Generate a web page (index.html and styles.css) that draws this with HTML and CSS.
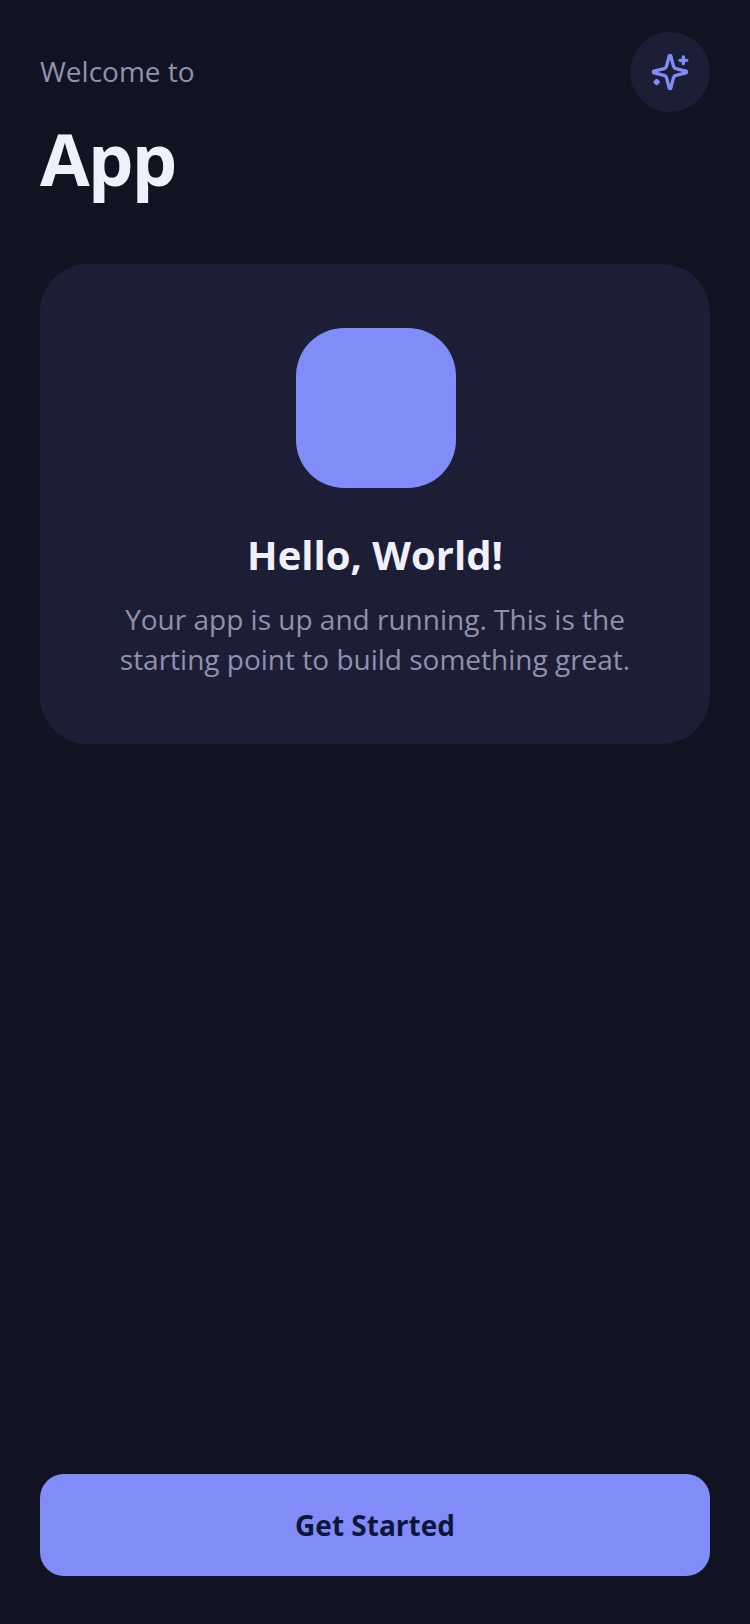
FILE: index.html
```html
<!DOCTYPE html>
<html lang="en">
<head>
<meta charset="utf-8">
<title>App</title>
<link rel="stylesheet" href="styles.css">
</head>
<body>
<main class="screen">
  <header class="header">
    <div class="titles">
      <p class="welcome">Welcome to</p>
      <h1 class="app-name">App</h1>
    </div>
    <button class="icon-btn" aria-label="Sparkles">
      <svg class="sparkle" viewBox="0 0 24 24" fill="none" stroke="currentColor" stroke-width="2" stroke-linecap="round" stroke-linejoin="round">
        <path d="M9.937 15.5A2 2 0 0 0 8.5 14.063l-6.135-1.582a.5.5 0 0 1 0-.962L8.5 9.936A2 2 0 0 0 9.937 8.5l1.582-6.135a.5.5 0 0 1 .963 0L14.063 8.5A2 2 0 0 0 15.5 9.937l6.135 1.581a.5.5 0 0 1 0 .964L15.5 14.063a2 2 0 0 0-1.437 1.437l-1.582 6.135a.5.5 0 0 1-.963 0z"/>
        <path d="M20 3v4"/><path d="M22 5h-4"/><path d="M4 17v2"/><path d="M5 18H3"/>
      </svg>
    </button>
  </header>
  <section class="card">
    <div class="logo"></div>
    <h2 class="card-title">Hello, World!</h2>
    <p class="card-text">Your app is up and running. This is the starting point to build something great.</p>
  </section>
  <div class="spacer"></div>
  <button class="cta">Get Started</button>
</main>
</body>
</html>
```
FILE: styles.css
```css
* { box-sizing: border-box; }
html, body { margin: 0; height: 100%; }
body { background: #111322; font-family: "Open Sans", sans-serif; }
.screen { height: 1624px; display: flex; flex-direction: column; padding: 32px 40px 48px; }
.header { display: flex; justify-content: space-between; align-items: flex-start; }
.welcome { margin: 0; padding-top: 20px; font-size: 28px; line-height: 38px; color: #8f91ae; }
.app-name { margin: 19px 0 -1px; font-size: 72px; line-height: 98px; font-weight: 700; letter-spacing: -1.8px; color: #f0f0fa; }
.icon-btn { width: 80px; height: 80px; border: 0; padding: 0; border-radius: 50%; background: #1c1e36; color: #818cf8; display: flex; align-items: center; justify-content: center; }
.sparkle { width: 40px; height: 40px; }
.card { margin-top: 58px; height: 480px; padding: 64px 40px 0; border-radius: 48px; background: #1c1e36; display: flex; flex-direction: column; align-items: center; text-align: center; }
.logo { width: 160px; height: 160px; margin-left: 2px; border-radius: 48px; background: #818cf8; }
.card-title { margin: 40px 0 0; font-size: 40px; line-height: 54px; font-weight: 700; color: #f0f0fa; }
.card-text { margin: 17px 0 0; font-size: 28px; line-height: 40px; color: #8f91ae; }
.spacer { flex: 1; }
.cta { height: 102px; border: 0; border-radius: 24px; background: #818cf8; color: #10163a; font-family: inherit; font-size: 28px; font-weight: 700; }
```
